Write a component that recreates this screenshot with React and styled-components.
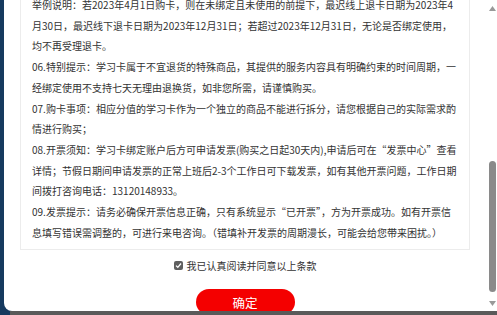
import { useLayoutEffect, useRef } from "react";
import styled, { createGlobalStyle } from "styled-components";

const GlobalStyle = createGlobalStyle`
  html, body {
    margin: 0;
    padding: 0;
  }
  body {
    background: #163a5f;
    font-family: "Noto Sans CJK SC", "Microsoft YaHei", sans-serif;
    overflow: hidden;
  }
`;

const Page = styled.div`
  width: 497px;
  height: 315px;
  display: flex;
  flex-direction: column;
  background: #163a5f;
`;

const Modal = styled.div`
  height: 311px;
  margin-left: 4px;
  display: flex;
  background: #fff;
  border-radius: 0 0 0 8px;
  overflow: hidden;
`;

const BottomShade = styled.div`
  height: 4px;
  margin-left: 10px;
  background: #5a5a5a;
`;

const ScrollArea = styled.div`
  flex: 1;
  position: relative;
  overflow-y: auto;
  scrollbar-width: none;
  padding: 16px 12px 16px 16px;

  &::-webkit-scrollbar {
    display: none;
  }
`;

const RulesBox = styled.div`
  border: 1px solid #ececec;
  padding: 8px 12px 6px 11px;
  color: #333;
  font-size: 10px;
  line-height: 20.7px;
`;

const Para = styled.p`
  margin: 0;
  white-space: nowrap;
`;

const AgreeRow = styled.label`
  display: flex;
  align-items: center;
  justify-content: center;
  gap: 4px;
  margin-top: 8px;
  font-size: 10px;
  line-height: 16px;
  color: #333;
  cursor: pointer;
`;

const CheckBox = styled.span`
  width: 9px;
  height: 9px;
  border-radius: 2px;
  background: #5f5f5f;
  display: flex;
  align-items: center;
  justify-content: center;
  margin-top: -2px;
`;

const ConfirmButton = styled.button`
  display: block;
  margin: 15px auto 0;
  width: 99px;
  height: 26px;
  border: none;
  border-radius: 13px;
  background: #f40000;
  color: #fff;
  font-family: inherit;
  font-size: 12.5px;
  cursor: pointer;
`;

const ScrollBar = styled.div`
  width: 15px;
  display: flex;
  flex-direction: column;
  padding-left: 5px;
  box-sizing: border-box;
  background: #fff;
`;

const ArrowBox = styled.div`
  height: 16px;
  display: flex;
  align-items: center;
  justify-content: center;
`;

const Track = styled.div`
  flex: 1;
  display: flex;
  flex-direction: column;
  align-items: center;
`;

const Thumb = styled.div`
  width: 7px;
  height: 131px;
  margin-top: 145px;
  border-radius: 4px;
  background: #8a8a8a;
`;

const rules = [
  [
    "举例说明：若2023年4月1日购卡，则在未绑定且未使用的前提下，最迟线上退卡日期为2023年4",
    "月30日，最迟线下退卡日期为2023年12月31日；若超过2023年12月31日，无论是否绑定使用，",
    "均不再受理退卡。",
  ],
  [
    "06.特别提示：学习卡属于不宜退货的特殊商品，其提供的服务内容具有明确约束的时间周期，一",
    "经绑定使用不支持七天无理由退换货，如非您所需，请谨慎购买。",
  ],
  [
    "07.购卡事项：相应分值的学习卡作为一个独立的商品不能进行拆分，请您根据自己的实际需求酌",
    "情进行购买；",
  ],
  [
    "08.开票须知：学习卡绑定账户后方可申请发票(购买之日起30天内),申请后可在“发票中心”查看",
    "详情；节假日期间申请发票的正常上班后2-3个工作日可下载发票，如有其他开票问题，工作日期",
    "间拨打咨询电话：13120148933。",
  ],
  [
    "09.发票提示：请务必确保开票信息正确，只有系统显示“已开票”，方为开票成功。如有开票信",
    "息填写错误需调整的，可进行来电咨询。（错填补开发票的周期漫长，可能会给您带来困扰。）",
  ],
];

export default function App() {
  const areaRef = useRef(null);
  const buttonRef = useRef(null);

  useLayoutEffect(() => {
    if (areaRef.current && buttonRef.current) {
      areaRef.current.scrollTop = buttonRef.current.offsetTop - 289;
    }
  }, []);

  return (
    <Page>
      <GlobalStyle />
      <Modal>
        <ScrollArea ref={areaRef}>
          <RulesBox>
            {rules.map((lines, i) => (
              <Para key={i}>
                {lines.map((line, j) => (
                  <span key={j}>
                    {line}
                    {j < lines.length - 1 && <br />}
                  </span>
                ))}
              </Para>
            ))}
          </RulesBox>
          <AgreeRow>
            <CheckBox>
              <svg width="7" height="7" viewBox="0 0 7 7">
                <polyline
                  points="1,3.6 2.8,5.3 6,1.5"
                  fill="none"
                  stroke="#fff"
                  strokeWidth="1.3"
                />
              </svg>
            </CheckBox>
            我已认真阅读并同意以上条款
          </AgreeRow>
          <ConfirmButton ref={buttonRef}>确定</ConfirmButton>
        </ScrollArea>
        <ScrollBar>
          <ArrowBox>
            <svg width="7" height="5" viewBox="0 0 7 5">
              <polygon points="3.5,0 7,5 0,5" fill="#999" />
            </svg>
          </ArrowBox>
          <Track>
            <Thumb />
          </Track>
          <ArrowBox>
            <svg width="7" height="5" viewBox="0 0 7 5">
              <polygon points="0,0 7,0 3.5,5" fill="#999" />
            </svg>
          </ArrowBox>
        </ScrollBar>
      </Modal>
      <BottomShade />
    </Page>
  );
}
